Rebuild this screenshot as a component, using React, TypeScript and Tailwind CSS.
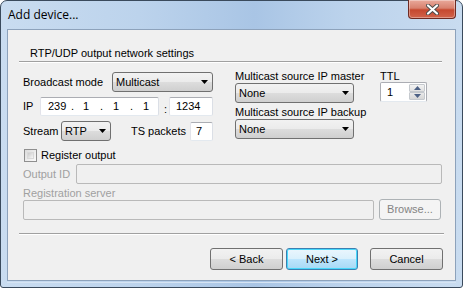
import React from 'react';

const font = { fontFamily: '"Liberation Sans", Arial, sans-serif' };

function Combo({ value, w }: { value: string; w: string }) {
  return (
    <div
      className={`${w} h-[20px] flex items-center justify-between rounded-[3px] border border-[#707070] bg-[linear-gradient(#f2f2f2_0%,#ebebeb_50%,#dddddd_50%,#cfcfcf_100%)] pl-[3px] pr-[4px] text-black`}
    >
      <span>{value}</span>
      <svg width="7" height="4" viewBox="0 0 7 4">
        <path d="M0 0h7L3.5 4z" fill="#000" />
      </svg>
    </div>
  );
}

function Field({ w, h = 'h-[19px]', children, disabled }: { w: string; h?: string; children?: React.ReactNode; disabled?: boolean }) {
  return (
    <div
      className={`${w} ${h} flex items-center rounded-[2px] border ${
        disabled ? 'border-[#b9b9b9] bg-[#f0f0f0]' : 'border-[#abadb3] border-l-[#e2e3ea] border-r-[#dbdfe6] border-b-[#e3e9ef] bg-white'
      } px-[3px] text-black`}
    >
      {children}
    </div>
  );
}

function Button({ label, w, h = 'h-[22px]', primary, disabled }: { label: string; w: string; h?: string; primary?: boolean; disabled?: boolean }) {
  return (
    <div
      className={`${w} ${h} flex items-center justify-center rounded-[3px] border ${
        primary
          ? 'border-[#3c7fb1] bg-[linear-gradient(#eaf6fd_0%,#d9f0fc_50%,#bee6fd_50%,#a7d9f5_100%)] shadow-[inset_0_0_0_1px_#48d8fb] text-black'
          : disabled
          ? 'border-[#adb2b5] bg-[#f4f4f4] text-[#838383]'
          : 'border-[#707070] bg-[linear-gradient(#f2f2f2_0%,#ebebeb_50%,#dddddd_50%,#cfcfcf_100%)] text-black'
      }`}
    >
      {label}
    </div>
  );
}

export default function App() {
  return (
    <div className="w-[463px] h-[288px] bg-white" style={font}>
      <div className="w-[463px] h-[288px] flex flex-col rounded-t-[7px] rounded-b-[3px] border border-[#3a4a5c] bg-[linear-gradient(90deg,#c9dcf0_0%,#bcd3ec_30%,#a9c5e5_55%,#bcd3ec_75%,#c9dcf0_100%)]">
        {/* title bar */}
        <div className="h-[28px] shrink-0 flex items-start justify-between pl-[7px] pr-[6px]">
          <span
            className="mt-[7px] text-[12px] leading-[14px] text-black"
            style={{ fontFamily: '"Open Sans", "Liberation Sans", sans-serif' }}
          >
            Add device...
          </span>
          <div className="w-[48px] h-[19px] -mt-px flex items-center justify-center rounded-b-[4px] border border-t-0 border-[#6e2a22] bg-[linear-gradient(#e9a99b_0%,#d8816f_45%,#c6482f_55%,#d1634b_100%)] shadow-[inset_0_0_0_1px_rgba(255,255,255,0.35)]">
            <svg width="13" height="11" viewBox="0 0 13 11">
              <path d="M2 1.5l9 8M11 1.5l-9 8" stroke="#4a4a4a" strokeWidth="4" strokeLinecap="round" />
              <path d="M2 1.5l9 8M11 1.5l-9 8" stroke="#fff" strokeWidth="2.2" strokeLinecap="round" />
            </svg>
          </div>
        </div>

        {/* client area */}
        <div className="ml-[6px] mr-[6px] h-[252px] shrink-0 overflow-hidden border border-[#8da2bb] bg-[#f0f0f0] text-[11px] leading-[13px] text-black">
          <div className="pl-[22px] pt-[17px]">RTP/UDP output network settings</div>
          <div className="ml-[11px] mr-[13px] mt-[1px] border-t border-[#a0a0a0] border-b border-b-white" />

          {/* settings grid */}
          <div className="flex pl-[15px] pt-[9px]">
            <div className="w-[190px] flex flex-col">
              <div className="flex items-center justify-between">
                <span>Broadcast mode</span>
                <Combo value="Multicast" w="w-[101px]" />
              </div>
              <div className="flex items-center mt-[4px]">
                <span className="w-[17px]">IP</span>
                <Field w="w-[119px]">
                  <span className="pl-[4px] flex">
                    <span className="w-[23px]">239</span>
                    <span className="w-[12px]">.</span>
                    <span className="w-[17px]">1</span>
                    <span className="w-[13px]">.</span>
                    <span className="w-[17px]">1</span>
                    <span className="w-[13px]">.</span>
                    <span>1</span>
                  </span>
                </Field>
                <span className="w-[10px] pl-[5px] pt-[7px]">:</span>
                <Field w="w-[44px]">
                  <span className="pl-[3px]">1234</span>
                </Field>
              </div>
              <div className="flex items-center mt-[5px]">
                <span className="w-[38px]">Stream</span>
                <Combo value="RTP" w="w-[50px]" />
                <span className="ml-[20px] w-[59px]">TS packets</span>
                <Field w="w-[23px]">
                  <span className="pl-[2px]">7</span>
                </Field>
              </div>
            </div>

            <div className="ml-[22px] w-[119px] flex flex-col">
              <span className="-mt-[2px] whitespace-nowrap">Multicast source IP master</span>
              <Combo value="None" w="w-[119px]" />
              <span className="mt-[3px] whitespace-nowrap">Multicast source IP backup</span>
              <Combo value="None" w="w-[119px]" />
            </div>

            <div className="ml-[26px] flex flex-col">
              <span className="-mt-[2px]">TTL</span>
              <div className="w-[47px] h-[20px] -mt-px flex rounded-[2px] border border-[#abadb3] border-b-[#e3e9ef] bg-white">
                <span className="flex-1 pl-[6px] leading-[18px]">1</span>
                <div className="w-[16px] flex flex-col my-[1px] mr-[1px]">
                  <div className="flex-1 flex items-center justify-center rounded-[1px] border border-[#c5c9ce] bg-[linear-gradient(#f3f3f3,#e1e1e1)]">
                    <svg width="7" height="4" viewBox="0 0 7 4">
                      <path d="M0 4h7L3.5 0z" fill="#4d6185" />
                    </svg>
                  </div>
                  <div className="flex-1 flex items-center justify-center rounded-[1px] border border-[#c5c9ce] bg-[linear-gradient(#e9e9e9,#d6d6d6)]">
                    <svg width="7" height="4" viewBox="0 0 7 4">
                      <path d="M0 0h7L3.5 4z" fill="#4d6185" />
                    </svg>
                  </div>
                </div>
              </div>
            </div>
          </div>

          {/* registration */}
          <div className="pl-[16px] pt-[8px] flex items-center gap-[4px]">
            <div className="w-[13px] h-[13px] border border-[#8f8f8f] bg-[linear-gradient(135deg,#dcdcdc,#fbfbfb)] p-[2px]">
              <div className="w-full h-full border border-[#d9d9d9] bg-[linear-gradient(135deg,#cbcbcb,#f6f6f6)]" />
            </div>
            <span>Register output</span>
          </div>
          <div className="pl-[15px] pr-[13px] mt-[2px] flex items-center text-[#a0a0a0]">
            <span className="w-[53px]">Output ID</span>
            <Field w="flex-1" h="h-[20px]" disabled />
          </div>
          <div className="pl-[15px] mt-[3px] text-[#a0a0a0]">Registration server</div>
          <div className="pl-[15px] pr-[13px] -mt-px flex items-center">
            <Field w="w-[351px]" h="h-[20px]" disabled />
            <div className="ml-[5px]">
              <Button label="Browse..." w="w-[62px]" h="h-[21px]" disabled />
            </div>
          </div>

          <div className="ml-[11px] mr-[11px] mt-[13px] border-t border-[#a0a0a0] border-b border-b-white" />

          <div className="flex pl-[202px] pt-[13px]">
            <Button label="< Back" w="w-[73px]" />
            <div className="ml-[3px]">
              <Button label="Next >" w="w-[72px]" primary />
            </div>
            <div className="ml-[12px]">
              <Button label="Cancel" w="w-[73px]" />
            </div>
          </div>
        </div>
        <div className="mx-[6px] mt-[1px] h-px bg-[#d6e4f3]" />
      </div>
    </div>
  );
}
